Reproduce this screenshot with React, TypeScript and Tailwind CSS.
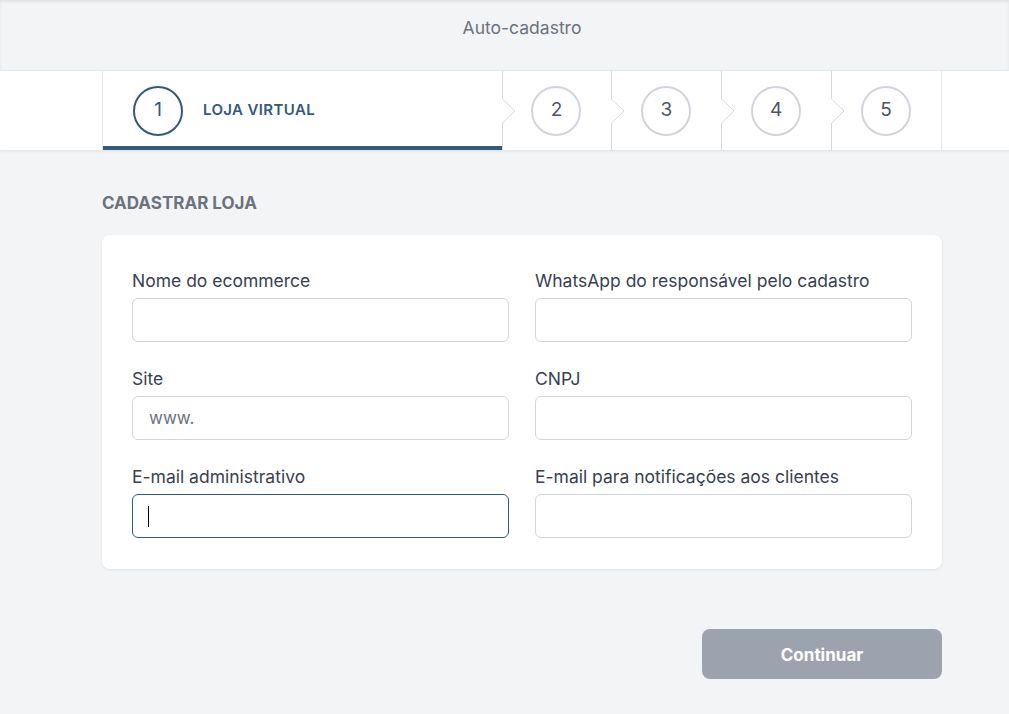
import React from 'react';

const font = { fontFamily: 'Inter, "Noto Sans", sans-serif' };

function StepNotch() {
  return (
    <svg className="absolute left-0 top-0 h-[80px] w-[14px]" viewBox="0 0 14 80" fill="none">
      <polyline points="0.5,0 0.5,28 13,40 0.5,52 0.5,80" stroke="#d6d8dc" strokeWidth="1" />
    </svg>
  );
}

function Field({ label, placeholder, focused }: { label: string; placeholder?: string; focused?: boolean }) {
  return (
    <div className="flex flex-col">
      <label className="mb-[7px] text-[17.5px] leading-5 text-[#374151]">{label}</label>
      <div className="relative">
        <input
          type="text"
          placeholder={placeholder}
          className={`h-[44px] w-full rounded-md border bg-white px-4 text-[17px] text-gray-700 outline-none placeholder:text-[#6b7280] ${
            focused ? 'border-[#35597a]' : 'border-[#d1d5db]'
          }`}
        />
        {focused && <span className="absolute left-[16px] top-[12px] h-[21px] w-px bg-black" />}
      </div>
    </div>
  );
}

export default function App() {
  const steps = [2, 3, 4, 5];

  return (
    <div className="min-h-screen bg-[#f3f4f6]" style={font}>
      <div className="h-[70px] shadow-[inset_0_2px_3px_rgba(0,0,0,0.07)]">
        <div className="ml-[102px] flex w-[840px] justify-center pt-[16px]">
          <span className="text-[17.5px] leading-6 text-[#6b7280]">Auto-cadastro</span>
        </div>
      </div>

      <div className="h-[81px] border-y border-[#e5e7eb] bg-white shadow-[0_1px_2px_rgba(0,0,0,0.06)]">
        <div className="ml-[102px] flex h-full w-[840px]">
          <div className="relative flex w-[400px] items-center border-l border-[#e5e7eb] pl-[30px]">
            <div className="flex h-[50px] w-[50px] items-center justify-center rounded-full border-2 border-[#35597a] text-[19px] text-[#35597a]">
              1
            </div>
            <span className="ml-5 text-[15px] font-semibold tracking-wide text-[#35597a]">LOJA VIRTUAL</span>
            <div className="absolute bottom-0 left-0 right-0 h-[4px] bg-[#35597a]" />
          </div>
          {steps.map((n) => (
            <div key={n} className="relative flex w-[110px] items-center justify-center">
              <StepNotch />
              <div className="flex h-[50px] w-[50px] items-center justify-center rounded-full border-2 border-[#d1d5db] text-[19px] text-[#4b5563]">
                {n}
              </div>
            </div>
          ))}
          <div className="w-px bg-[#e5e7eb]" />
        </div>
      </div>

      <div className="ml-[102px] w-[840px]">
        <h2 className="mt-[40px] text-[17px] font-bold leading-6 text-[#6b7280]">CADASTRAR LOJA</h2>

        <div className="mt-[20px] rounded-lg bg-white px-[30px] pb-[31px] pt-[36px] shadow-[0_1px_3px_rgba(0,0,0,0.08)]">
          <div className="grid grid-cols-2 gap-x-[26px] gap-y-[27px]">
            <Field label="Nome do ecommerce" />
            <Field label="WhatsApp do responsável pelo cadastro" />
            <Field label="Site" placeholder="www." />
            <Field label="CNPJ" />
            <Field label="E-mail administrativo" focused />
            <Field label="E-mail para notificações aos clientes" />
          </div>
        </div>

        <div className="mt-[60px] flex justify-end">
          <button className="h-[50px] w-[240px] rounded-lg bg-[#9ca3af] pt-[3px] text-[17px] font-bold text-white">
            Continuar
          </button>
        </div>
      </div>
    </div>
  );
}
